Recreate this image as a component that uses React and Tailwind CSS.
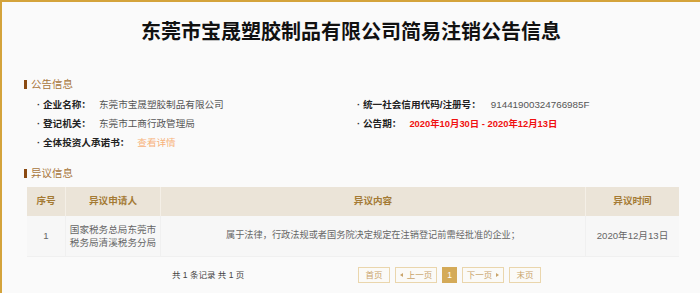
const font = { fontFamily: '"Liberation Sans", "Noto Sans CJK SC", sans-serif' }

function SectionTitle({ children }) {
  return (
    <div className="flex items-center h-[14px] pl-[22px]">
      <span className="w-[3px] h-[9px] bg-[#8a4a12]" />
      <span className="ml-[4px] text-[10.5px] leading-[14px] text-[#a8763c]">{children}</span>
    </div>
  )
}

function Item({ label, children }) {
  return (
    <div className="flex items-center h-[19px] text-[9.6px]">
      <span className="w-[6px] text-[#333] font-bold">·</span>
      <span className="font-bold text-[#222]">{label}</span>
      <span className="ml-[8px]">{children}</span>
    </div>
  )
}

function PageBtn({ children, active }) {
  return (
    <span
      className={
        'h-[16px] flex items-center justify-center border text-[8.5px] whitespace-nowrap ' +
        (active ? 'bg-[#d4aa58] border-[#d4aa58] text-white' : 'border-[#ead6ad] text-[#c9a46a] bg-[#fbfaf7]')
      }
    >
      {children}
    </span>
  )
}

export default function App() {
  return (
    <div style={font} className="w-[700px] h-[293px] overflow-hidden bg-[#fafafa] border-t-2 border-l-2 border-[#d4a33b]">
      <h1 className="pt-[18px] h-[42px] text-center text-[20px] leading-[24px] font-bold text-[#111]">
        东莞市宝晟塑胶制品有限公司简易注销公告信息
      </h1>

      <div className="mt-[33px]">
        <SectionTitle>公告信息</SectionTitle>
      </div>

      <div className="mt-[5px] pl-[35px] grid grid-cols-[320px_1fr]">
        <div>
          <Item label="企业名称：">
            <span className="text-[#555]">东莞市宝晟塑胶制品有限公司</span>
          </Item>
          <Item label="登记机关：">
            <span className="text-[#555]">东莞市工商行政管理局</span>
          </Item>
          <Item label="全体投资人承诺书：">
            <span className="text-[#f7b27a]">查看详情</span>
          </Item>
        </div>
        <div>
          <Item label="统一社会信用代码/注册号：">
            <span className="ml-[2px] text-[9.8px] text-[#555]">91441900324766985F</span>
          </Item>
          <Item label="公告期：">
            <span className="text-[9.4px] font-bold text-[#f01010]">2020年10月30日 - 2020年12月13日</span>
          </Item>
        </div>
      </div>

      <div className="mt-[13px]">
        <SectionTitle>异议信息</SectionTitle>
      </div>

      <div className="mt-[7px] ml-[25px] w-[652px] text-[9.6px]">
        <div className="grid grid-cols-[38px_95px_425px_94px] h-[29px] bg-[#ebe4d8] font-bold text-[#a47a34]">
          <div className="flex items-center justify-center">序号</div>
          <div className="flex items-center justify-center border-l border-[#f4efe7]">异议申请人</div>
          <div className="flex items-center justify-center border-l border-[#f4efe7]">异议内容</div>
          <div className="flex items-center justify-center border-l border-[#f4efe7]">异议时间</div>
        </div>
        <div className="grid grid-cols-[38px_95px_425px_94px] h-[41px] bg-[#f7f7f7] text-[#666] border-b border-[#f0f0f0]">
          <div className="flex items-center justify-center">1</div>
          <div className="flex items-center justify-center text-center leading-[13px] border-l border-[#f0f0f0]">
            国家税务总局东莞市<br />税务局清溪税务分局
          </div>
          <div className="flex items-center justify-center text-[9.2px] border-l border-[#f0f0f0]">
            属于法律，行政法规或者国务院决定规定在注销登记前需经批准的企业；
          </div>
          <div className="flex items-center justify-center border-l border-[#f0f0f0]">2020年12月13日</div>
        </div>
      </div>

      <div className="mt-[10px] flex items-center h-[16px]">
        <span className="ml-[170px] w-[70px] whitespace-nowrap text-[8.5px] text-[#444]">共 1 条记录 共 1 页</span>
        <div className="ml-[116px] grid grid-cols-[32px_42px_15px_42px_32px] gap-[5px]">
          <PageBtn>首页</PageBtn>
          <PageBtn>
            <span className="mr-[4px] border-y-[2.5px] border-r-[3px] border-y-transparent border-r-[#c9a46a]" />
            上一页
          </PageBtn>
          <PageBtn active>1</PageBtn>
          <PageBtn>
            下一页
            <span className="ml-[4px] border-y-[2.5px] border-l-[3px] border-y-transparent border-l-[#c9a46a]" />
          </PageBtn>
          <PageBtn>末页</PageBtn>
        </div>
      </div>
    </div>
  )
}
